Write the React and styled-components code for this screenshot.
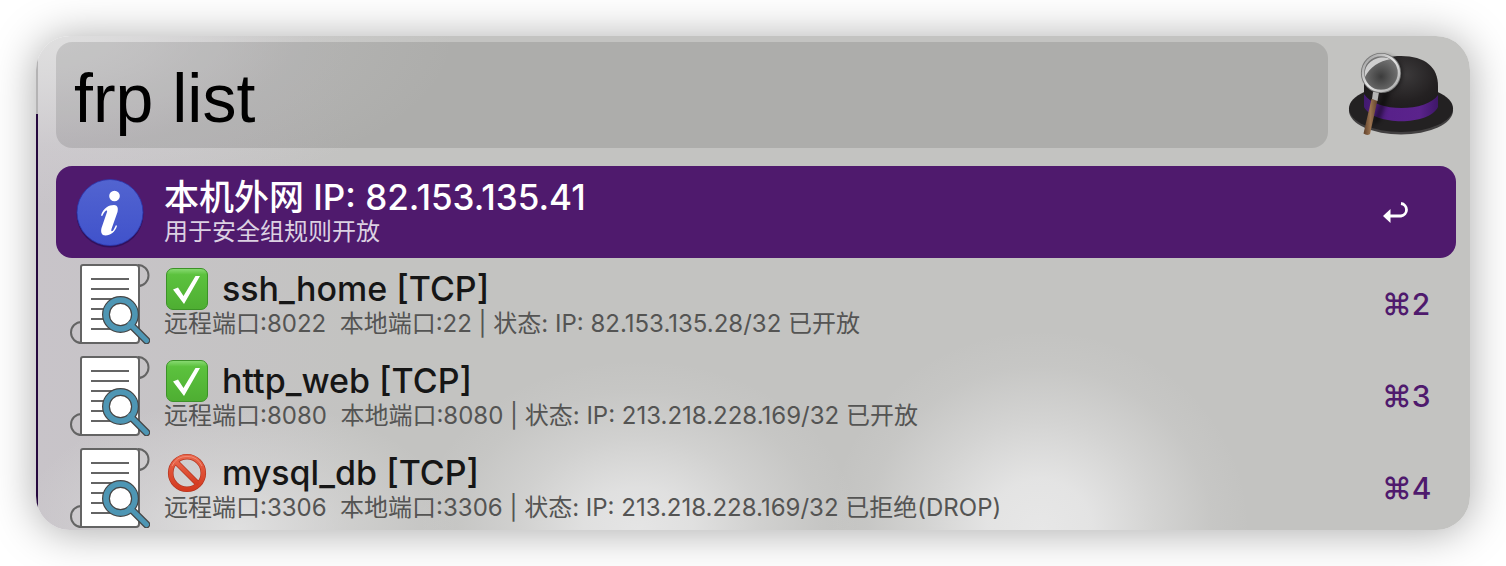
import React from "react";
import styled, { createGlobalStyle } from "styled-components";

const GlobalStyle = createGlobalStyle`
  *, *::before, *::after { box-sizing: border-box; }
  body {
    margin: 0;
    background: #fff;
    font-family: Inter, "Noto Sans CJK SC", sans-serif;
  }
`;

const Stage = styled.div`
  padding: 36px;
`;

const Panel = styled.main`
  overflow: hidden;
  padding: 6px 14px 0 20px;
  border-radius: 34px;
  box-shadow: 0 2px 44px rgba(0, 0, 0, 0.34);
  background:
    linear-gradient(#b4b3b4 78px, #25083e 78px) left / 2px 100% no-repeat,
    radial-gradient(ellipse 220px 170px at 42% 100%, rgba(229, 229, 229, 1) 0%, rgba(229, 229, 229, 0.85) 25%, rgba(229, 229, 229, 0.4) 55%, rgba(229, 229, 229, 0.1) 82%, rgba(229, 229, 229, 0) 100%),
    radial-gradient(ellipse 210px 200px at 70% 100%, rgba(231, 231, 231, 1) 0%, rgba(231, 231, 231, 0.9) 25%, rgba(231, 231, 231, 0.45) 55%, rgba(231, 231, 231, 0.1) 82%, rgba(231, 231, 231, 0) 100%),
    radial-gradient(ellipse 220px 130px at 14% 100%, rgba(224, 224, 224, 1) 0%, rgba(224, 224, 224, 0.4) 50%, rgba(224, 224, 224, 0) 100%),
    radial-gradient(ellipse 420px 170px at 0% 0%, rgba(224, 224, 224, 1) 0%, rgba(224, 224, 224, 0.7) 28%, rgba(224, 224, 224, 0.2) 65%, rgba(224, 224, 224, 0) 100%),
    linear-gradient(90deg, #c8c4c9 0%, #c3c3c1 22%);
`;

const Header = styled.header`
  display: flex;
  align-items: flex-start;
  gap: 20px;
  margin-bottom: 18px;
`;

const SearchInput = styled.input`
  flex: 1;
  min-width: 0;
  height: 106px;
  padding: 6px 18px 0;
  border: 0;
  border-radius: 16px;
  outline: 0;
  background: rgba(0, 0, 0, 0.11);
  color: #000;
  font-family: "Liberation Sans", "Noto Sans CJK SC", sans-serif;
  font-size: 68px;
  font-weight: 400;
`;

const Results = styled.ul`
  margin: 0;
  padding: 0;
  list-style: none;
`;

const Item = styled.li`
  height: 92px;
  &:last-child { height: 88px; }
`;

const Row = styled.button`
  display: flex;
  align-items: flex-start;
  gap: 14px;
  width: 100%;
  padding: 6px 14px;
  border: 0;
  border-radius: 16px;
  background: ${(p) => (p.$selected ? "#4f1a6d" : "transparent")};
  color: ${(p) => (p.$selected ? "#fff" : "#161616")};
  font-family: inherit;
  text-align: left;
`;

const Texts = styled.span`
  flex: 1;
  min-width: 0;
  display: flex;
  flex-direction: column;
  height: 80px;
  padding-top: 3px;
  white-space: nowrap;
`;

const Title = styled.span`
  display: flex;
  align-items: center;
  gap: 14px;
  height: 44px;
  font-size: ${(p) => (p.$selected ? 35 : 34)}px;
  font-weight: ${(p) => (p.$selected ? 500 : 450)};
  line-height: 44px;
`;

const Subtitle = styled.span`
  font-size: 24px;
  line-height: 26px;
  white-space: pre;
  color: ${(p) => (p.$selected ? "#dcd1e2" : "#545453")};
`;

const Shortcut = styled.span`
  display: flex;
  align-items: center;
  width: 60px;
  height: 80px;
  color: #4f1a6d;
  font-size: 30px;
  font-weight: 500;
`;

const Picture = styled.svg`
  display: block;
  flex: none;
`;

function Hat() {
  return (
    <Picture width="108" height="106" viewBox="1348 42 108 106" aria-hidden="true">
      <defs>
        <radialGradient id="dome" cx="0.55" cy="0.3" r="0.7">
          <stop offset="0" stopColor="#3c3a3b" />
          <stop offset="0.6" stopColor="#242122" />
          <stop offset="1" stopColor="#1b191a" />
        </radialGradient>
        <linearGradient id="band">
          <stop offset="0" stopColor="#421a70" />
          <stop offset="0.35" stopColor="#58218a" />
          <stop offset="0.75" stopColor="#5b238c" />
          <stop offset="1" stopColor="#3e1768" />
        </linearGradient>
        <radialGradient id="glass" cx="0.5" cy="0.6" r="0.55">
          <stop offset="0" stopColor="#3c3c3c" />
          <stop offset="1" stopColor="#777" />
        </radialGradient>
        <linearGradient id="rim" x1="0" y1="0" x2="1" y2="1">
          <stop offset="0" stopColor="#989898" />
          <stop offset="0.5" stopColor="#e5e5e5" />
          <stop offset="1" stopColor="#a5a5a5" />
        </linearGradient>
        <linearGradient id="wood">
          <stop offset="0" stopColor="#5f4029" />
          <stop offset="0.5" stopColor="#9a7350" />
          <stop offset="1" stopColor="#60422c" />
        </linearGradient>
        <filter id="soft" x="-30%" y="-30%" width="160%" height="160%">
          <feGaussianBlur stdDeviation="2" />
        </filter>
      </defs>
      <ellipse cx="1401" cy="110.500" rx="52" ry="24" fill="#424041" />
      <ellipse cx="1401" cy="108.500" rx="52" ry="23.500" fill="#232122" />
      <path d="M1364 106 V84 C1365 66 1380 56 1401 56 C1425 56 1438 67 1438 86 V106 C1427 122 1376 122 1364 106Z" fill="url(#dome)" />
      <path d="M1364 94 C1376 113 1427 112 1438 95 V107 C1429 126 1374 126 1364 107Z" fill="url(#band)" />
      <path d="M1383 93 L1390 92 L1380 121 L1371 127Z" fill="#000" opacity="0.45" filter="url(#soft)" />
      <circle cx="1383.500" cy="74" r="19" fill="#000" opacity="0.45" filter="url(#soft)" />
      <path d="M1371.500 99 L1377.500 100 L1370 134 Q1367 136 1363.500 133.500Z" fill="url(#wood)" />
      <path d="M1373 92 H1379 L1377.500 101 L1372 99Z" fill="#b5b5b5" />
      <circle cx="1381" cy="73" r="18" fill="url(#glass)" />
      <path d="M1365 77 C1363 63 1377 54 1391 59 C1379 61 1370 67 1365 77Z" fill="#cfcfcf" />
      <circle cx="1381" cy="73" r="18.300" fill="none" stroke="#777" strokeWidth="3.600" />
      <circle cx="1381" cy="73" r="18" fill="none" stroke="url(#rim)" strokeWidth="2.400" />
    </Picture>
  );
}

function InfoIcon() {
  return (
    <Picture width="80" height="80" viewBox="0 0 80 80" aria-hidden="true">
      <defs>
        <linearGradient id="info" x1="0" y1="0" x2="0" y2="1">
          <stop offset="0" stopColor="#5264d0" />
          <stop offset="1" stopColor="#4052cb" />
        </linearGradient>
      </defs>
      <circle cx="40" cy="42" r="33.500" fill="#260d55" opacity="0.7" />
      <circle cx="40" cy="40.500" r="33" fill="url(#info)" stroke="#2b39b0" strokeWidth="0.800" />
      <circle cx="44.500" cy="24" r="5.300" fill="#fff" />
      <path d="M31 43.500 C33 36 39 33 44 33 C47.500 33 48.500 36 47.500 40 L41.500 57 C40.600 60 42.500 60 44 57 L46 53 L47 54 C45 60 40.500 63.500 35.500 63.500 C31.500 63.500 30.500 60 31.500 56 L37 40 C37.800 37.500 35 38 32.200 44Z" fill="#fff" />
    </Picture>
  );
}

function LogIcon() {
  return (
    <Picture width="80" height="80" viewBox="0 0 80 80" aria-hidden="true">
      <g fill="none" stroke="#646464" strokeWidth="2">
        <path d="M68 1 A10.500 10.500 0 0 1 68 22" />
        <path d="M11.500 58 A10.500 10.500 0 0 0 11.500 79" />
        <path d="M13 1 H66 Q69 1 69 4 V76 Q69 79 66 79 H11 V3 Q11 1 13 1Z" fill="#fff" />
        <path d="M21 15 H59 M21 25 H59 M21 35 H59 M21 45 H59 M21 55 H59 M21 65 H59" />
      </g>
      <path d="M60 60 L76.500 76.500" stroke="#464646" strokeWidth="7.500" strokeLinecap="round" />
      <circle cx="50.500" cy="50.500" r="14.500" fill="#fff" stroke="#464646" strokeWidth="8" />
      <path d="M60 60 L76.500 76.500" stroke="#4e96b4" strokeWidth="5" strokeLinecap="round" />
      <circle cx="50.500" cy="50.500" r="14.500" fill="none" stroke="#4e96b4" strokeWidth="5.600" />
    </Picture>
  );
}

function AllowedIcon() {
  return (
    <Picture width="44" height="44" viewBox="0 0 44 44" role="img" aria-label="已开放">
      <defs>
        <linearGradient id="allowed" x1="0" y1="0" x2="0" y2="1">
          <stop offset="0" stopColor="#8bdb75" />
          <stop offset="0.150" stopColor="#5cc23e" />
          <stop offset="1" stopColor="#4eae32" />
        </linearGradient>
      </defs>
      <rect x="2.500" y="1.500" width="41" height="41" rx="6.500" fill="url(#allowed)" stroke="#3c9228" />
      <path d="M9 22.500 L14 20.500 L19.500 29 L31.500 9 H36 L20 37Z" fill="#fff" />
    </Picture>
  );
}

function BlockedIcon() {
  return (
    <Picture width="44" height="44" viewBox="0 0 44 44" role="img" aria-label="已拒绝">
      <defs>
        <linearGradient id="blocked" x1="0" y1="0" x2="0" y2="1">
          <stop offset="0" stopColor="#e86449" />
          <stop offset="1" stopColor="#d43a20" />
        </linearGradient>
      </defs>
      <g fill="none" stroke="#b4351f" strokeWidth="5.600">
        <circle cx="23" cy="22" r="16.300" />
        <path d="M11.500 10.500 L34.500 33.500" />
      </g>
      <g fill="none" stroke="url(#blocked)" strokeWidth="4.200">
        <circle cx="23" cy="22" r="16.300" />
        <path d="M11.500 10.500 L34.500 33.500" />
      </g>
      <path d="M8 15 A16.500 16.500 0 0 1 38 15" fill="none" stroke="#f08b75" />
    </Picture>
  );
}

function ReturnIcon() {
  return (
    <Picture width="30" height="30" viewBox="0 0 30 30" role="img" aria-label="Return">
      <path d="M19 6.500 A6.300 6.300 0 0 1 19 19 H8" fill="none" stroke="#fff" strokeWidth="2.800" />
      <path d="M1 19 L8.500 12 V26Z" fill="#fff" />
    </Picture>
  );
}

const tunnels = [
  { name: "ssh_home [TCP]", detail: "远程端口:8022  本地端口:22 | 状态: IP: 82.153.135.28/32 已开放", key: 2, allowed: true },
  { name: "http_web [TCP]", detail: "远程端口:8080  本地端口:8080 | 状态: IP: 213.218.228.169/32 已开放", key: 3, allowed: true },
  { name: "mysql_db [TCP]", detail: "远程端口:3306  本地端口:3306 | 状态: IP: 213.218.228.169/32 已拒绝(DROP)", key: 4, allowed: false },
];

export default function App() {
  return (
    <Stage>
      <GlobalStyle />
      <Panel>
        <Header>
          <SearchInput type="text" aria-label="Search" defaultValue="frp list" spellCheck={false} />
          <Hat />
        </Header>
        <Results>
          <Item>
            <Row type="button" $selected>
              <InfoIcon />
              <Texts>
                <Title $selected>本机外网 IP: 82.153.135.41</Title>
                <Subtitle $selected>用于安全组规则开放</Subtitle>
              </Texts>
              <Shortcut><ReturnIcon /></Shortcut>
            </Row>
          </Item>
          {tunnels.map((t) => (
            <Item key={t.key}>
              <Row type="button">
                <LogIcon />
                <Texts>
                  <Title>
                    {t.allowed ? <AllowedIcon /> : <BlockedIcon />}
                    {t.name}
                  </Title>
                  <Subtitle>{t.detail}</Subtitle>
                </Texts>
                <Shortcut>⌘{t.key}</Shortcut>
              </Row>
            </Item>
          ))}
        </Results>
      </Panel>
    </Stage>
  );
}
